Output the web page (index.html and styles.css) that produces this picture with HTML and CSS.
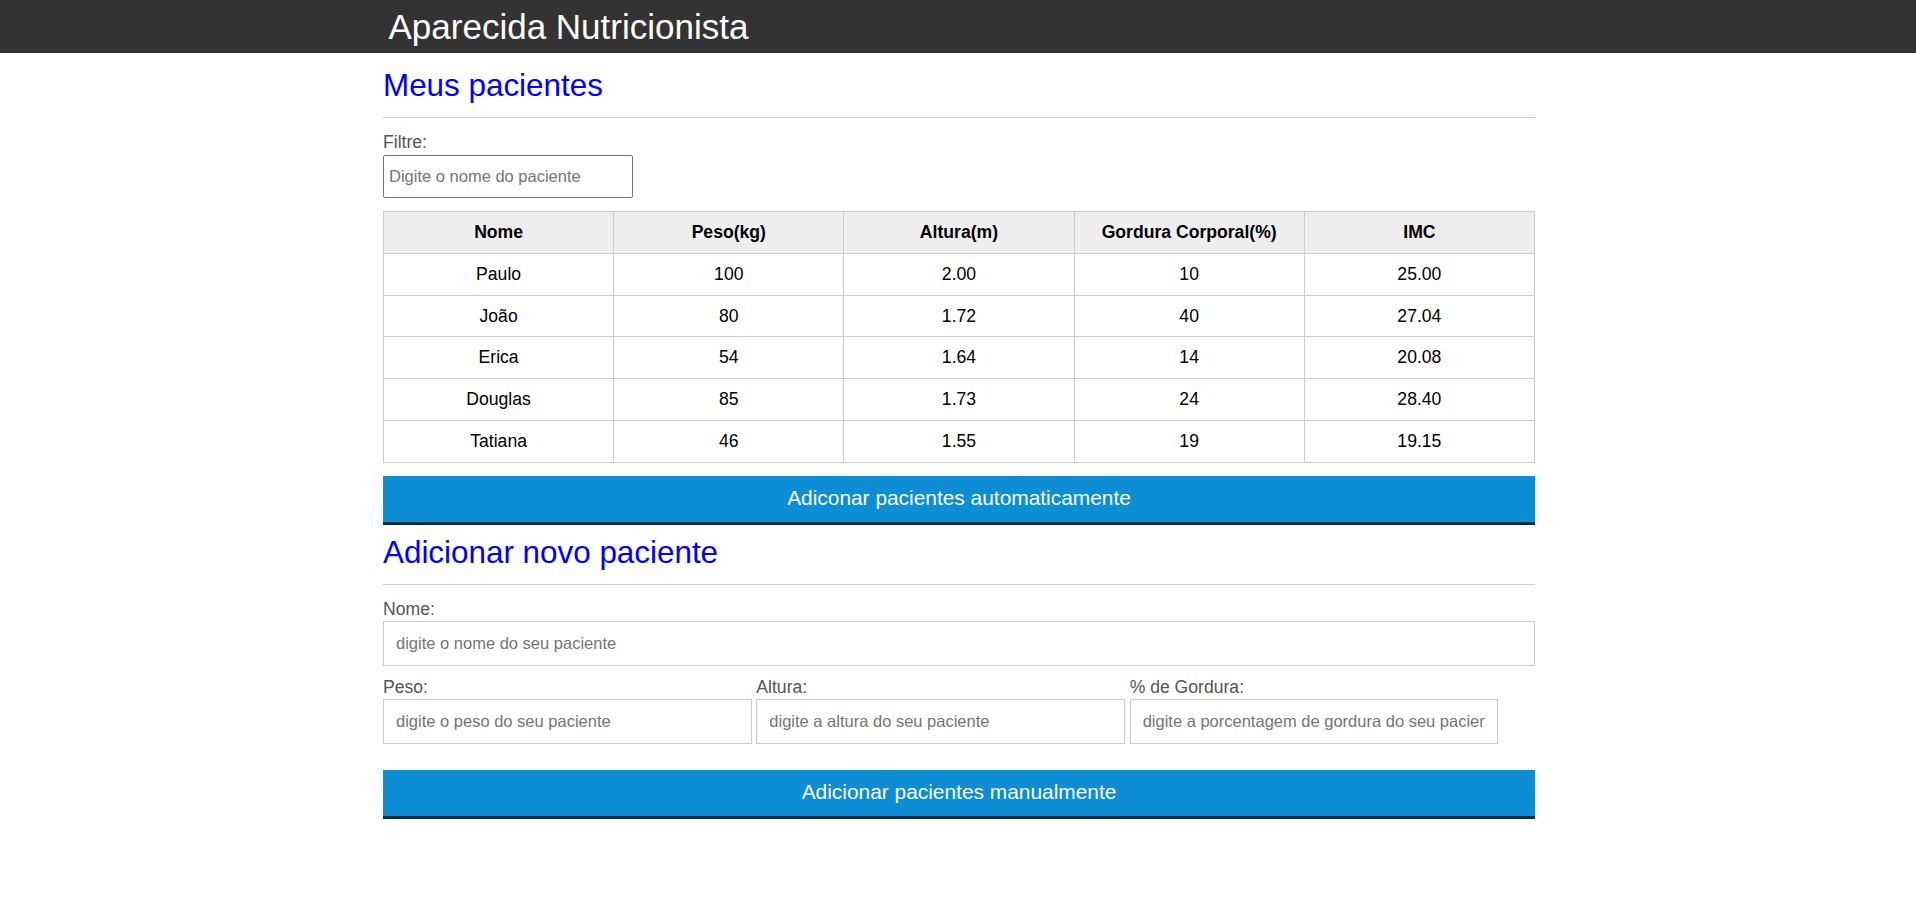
FILE: index.html
```html
<!DOCTYPE html>
<html lang="pt-br">
<head>
<meta charset="utf-8">
<title>Aparecida Nutricionista</title>
<link rel="stylesheet" href="styles.css">
</head>
<body>
<header class="topo">
  <div class="container">
    <h1 class="titulo">Aparecida Nutricionista</h1>
  </div>
</header>
<main class="container">
  <section class="secao-pacientes">
    <h2 class="secao-titulo">Meus pacientes</h2>
    <div class="filtro">
      <label class="rotulo" for="filtrar-tabela">Filtre:</label>
      <input class="campo-filtro" id="filtrar-tabela" type="text" placeholder="Digite o nome do paciente">
    </div>
    <table class="tabela">
      <thead>
        <tr><th>Nome</th><th>Peso(kg)</th><th>Altura(m)</th><th>Gordura Corporal(%)</th><th>IMC</th></tr>
      </thead>
      <tbody>
        <tr><td>Paulo</td><td>100</td><td>2.00</td><td>10</td><td>25.00</td></tr>
        <tr><td>João</td><td>80</td><td>1.72</td><td>40</td><td>27.04</td></tr>
        <tr><td>Erica</td><td>54</td><td>1.64</td><td>14</td><td>20.08</td></tr>
        <tr><td>Douglas</td><td>85</td><td>1.73</td><td>24</td><td>28.40</td></tr>
        <tr><td>Tatiana</td><td>46</td><td>1.55</td><td>19</td><td>19.15</td></tr>
      </tbody>
    </table>
    <button class="botao botao-auto" type="button">Adiconar pacientes automaticamente</button>
  </section>
  <section class="secao-form">
    <h2 class="secao-titulo">Adicionar novo paciente</h2>
    <form class="formulario">
      <div class="grupo grupo-nome">
        <label class="rotulo" for="nome">Nome:</label>
        <input class="campo" id="nome" type="text" placeholder="digite o nome do seu paciente">
      </div>
      <div class="linha">
        <div class="grupo grupo-terco">
          <label class="rotulo" for="peso">Peso:</label>
          <input class="campo" id="peso" type="text" placeholder="digite o peso do seu paciente">
        </div>
        <div class="grupo grupo-terco">
          <label class="rotulo" for="altura">Altura:</label>
          <input class="campo" id="altura" type="text" placeholder="digite a altura do seu paciente">
        </div>
        <div class="grupo grupo-terco">
          <label class="rotulo" for="gordura">% de Gordura:</label>
          <input class="campo" id="gordura" type="text" placeholder="digite a porcentagem de gordura do seu paciente">
        </div>
      </div>
      <button class="botao botao-manual" type="button">Adicionar pacientes manualmente</button>
    </form>
  </section>
</main>
</body>
</html>
```
FILE: styles.css
```css
* {
  box-sizing: border-box;
}

body {
  margin: 0;
  padding-left: 2px;
  font-family: "Liberation Sans", Arial, sans-serif;
  background: #fff;
  color: #000;
}

.topo {
  background: #333;
  height: 53px;
  margin-left: -2px;
  padding-left: 2px;
}

.container {
  width: 1152px;
  margin: 0 auto;
}

.titulo {
  margin: 0;
  padding: 0 5.5px;
  font-size: 35px;
  font-weight: normal;
  line-height: 53px;
  color: #fff;
}

.secao-titulo {
  margin: 0;
  font-size: 31.4px;
  font-weight: normal;
  line-height: 36px;
  color: #00f;
  padding-bottom: 13px;
  border-bottom: 1px solid #ccc;
}

.secao-pacientes .secao-titulo {
  margin-top: 15px;
}

.secao-form .secao-titulo {
  margin-top: 10px;
}

.rotulo {
  display: block;
  font-size: 17.6px;
  line-height: 20px;
  color: #555;
  margin-bottom: 2.5px;
}

.filtro {
  margin-top: 14px;
}

.campo-filtro {
  display: block;
  width: 250px;
  height: 43px;
  margin: 0;
  padding: 0 5px;
  border: 1px solid #767676;
  border-radius: 2px;
  font-family: inherit;
  font-size: 16.5px;
  color: #000;
  background: #fff;
}

.campo-filtro::placeholder,
.campo::placeholder {
  color: #757575;
}

.tabela {
  width: 100%;
  margin-top: 13.5px;
  border-collapse: collapse;
  table-layout: fixed;
  font-size: 17.6px;
}

.tabela th,
.tabela td {
  border: 1px solid #ccc;
  padding: 0;
  line-height: 40.8px;
  text-align: center;
  color: #000;
}

.tabela th {
  background: #eee;
  font-weight: bold;
}

.botao {
  display: block;
  width: 100%;
  margin: 0;
  padding: 0 0 2px;
  border: none;
  border-bottom: 3px solid #00304f;
  background: #0d8dd3;
  color: #fff;
  font-family: inherit;
  font-size: 20.9px;
  line-height: 44px;
  text-align: center;
  cursor: pointer;
}

.botao-auto {
  margin-top: 13px;
}

.botao-manual {
  margin-top: 25.5px;
}

.grupo-nome {
  margin-top: 14px;
}

.campo {
  display: block;
  width: 100%;
  height: 45px;
  margin: 0;
  padding: 0 12px;
  border: 1px solid #ccc;
  font-family: inherit;
  font-size: 16.5px;
  color: #000;
  background: #fff;
}

.linha {
  display: flex;
  gap: 4.7px;
  margin-top: 10.5px;
}

.grupo-terco {
  width: 32%;
  flex: 0 0 32%;
}
```
